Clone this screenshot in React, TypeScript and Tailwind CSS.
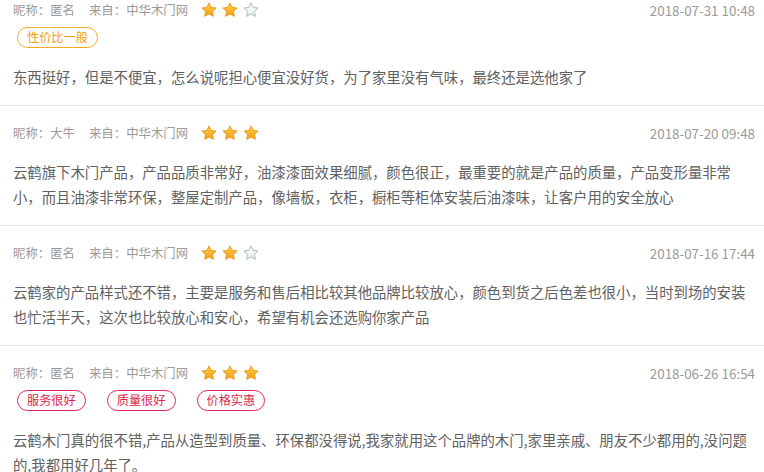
import React from "react";

// --- Types ---
interface Tag {
    text: string;
    tone: "orange" | "red";
}

interface Review {
    id: number;
    name: string;
    source: string;
    stars: number;
    date: string;
    tags: Tag[];
    content: string;
}

const reviews: Review[] = [
    {
        id: 1,
        name: "匿名",
        source: "中华木门网",
        stars: 2,
        date: "2018-07-31 10:48",
        tags: [{ text: "性价比一般", tone: "orange" }],
        content:
            "东西挺好，但是不便宜，怎么说呢担心便宜没好货，为了家里没有气味，最终还是选他家了",
    },
    {
        id: 2,
        name: "大牛",
        source: "中华木门网",
        stars: 3,
        date: "2018-07-20 09:48",
        tags: [],
        content:
            "云鹤旗下木门产品，产品品质非常好，油漆漆面效果细腻，颜色很正，最重要的就是产品的质量，产品变形量非常小，而且油漆非常环保，整屋定制产品，像墙板，衣柜，橱柜等柜体安装后油漆味，让客户用的安全放心",
    },
    {
        id: 3,
        name: "匿名",
        source: "中华木门网",
        stars: 2,
        date: "2018-07-16 17:44",
        tags: [],
        content:
            "云鹤家的产品样式还不错，主要是服务和售后相比较其他品牌比较放心，颜色到货之后色差也很小，当时到场的安装也忙活半天，这次也比较放心和安心，希望有机会还选购你家产品",
    },
    {
        id: 4,
        name: "匿名",
        source: "中华木门网",
        stars: 3,
        date: "2018-06-26 16:54",
        tags: [
            { text: "服务很好", tone: "red" },
            { text: "质量很好", tone: "red" },
            { text: "价格实惠", tone: "red" },
        ],
        content:
            "云鹤木门真的很不错,产品从造型到质量、环保都没得说,我家就用这个品牌的木门,家里亲戚、朋友不少都用的,没问题的,我都用好几年了。",
    },
];

const STAR_PATH =
    "M12 2.6l2.85 5.95 6.55.85-4.8 4.55 1.2 6.5L12 17.3l-5.8 3.15 1.2-6.5-4.8-4.55 6.55-.85z";

const Star: React.FC<{ filled: boolean }> = ({ filled }) => (
    <svg width="18" height="18" viewBox="0 0 24 24">
        <defs>
            <linearGradient id="starFill" x1="0" y1="0" x2="0" y2="1">
                <stop offset="0%" stopColor="#ffcf4d" />
                <stop offset="100%" stopColor="#f79a12" />
            </linearGradient>
            <linearGradient id="starEmpty" x1="0" y1="0" x2="0" y2="1">
                <stop offset="0%" stopColor="#ffffff" />
                <stop offset="100%" stopColor="#e4ecec" />
            </linearGradient>
        </defs>
        <path
            d={STAR_PATH}
            fill={filled ? "url(#starFill)" : "url(#starEmpty)"}
            stroke={filled ? "#eb9a1c" : "#a9b8ba"}
            strokeWidth="1.3"
            strokeLinejoin="round"
        />
    </svg>
);

const ReviewItem: React.FC<{ review: Review }> = ({ review }) => (
    <li className="border-b border-[#e6e6e6] pt-[17px] pb-[16px] pl-[13px] pr-[9px] first:pt-0">
        {/* Header: name, source, stars, date */}
        <div className="flex items-center h-[20px] text-[12.4px] text-[#9a9a9a]">
            <span>昵称：{review.name}</span>
            <span className="ml-[14px]">来自：{review.source}</span>
            <span className="ml-[12px] flex items-center gap-[3px]">
                {[0, 1, 2].map((i) => (
                    <Star key={i} filled={i < review.stars} />
                ))}
            </span>
            <span className="ml-auto text-[13.4px] text-[#9a9a9a]">{review.date}</span>
        </div>

        {/* Tags */}
        {review.tags.length > 0 && (
            <div className="flex items-center gap-[21px] mt-[7px] ml-[4px]">
                {review.tags.map((tag) => (
                    <span
                        key={tag.text}
                        className={
                            tag.tone === "orange"
                                ? "h-[21px] flex items-center px-[9px] rounded-full border border-[#f7a823] text-[#f39c1a] text-[12.2px]"
                                : "h-[21px] flex items-center px-[9px] rounded-full border border-[#e4245a] text-[#dc1f50] text-[12.2px]"
                        }
                    >
                        {tag.text}
                    </span>
                ))}
            </div>
        )}

        {/* Content */}
        <p className="mt-[16px] text-[14.36px] leading-[25px] text-[#616161]">{review.content}</p>
    </li>
);

const App: React.FC = () => {
    return (
        <div
            className="w-[764px] h-[472px] overflow-hidden bg-white"
            style={{ fontFamily: '"Noto Sans CJK SC", "Noto Sans", sans-serif' }}
        >
            <ul>
                {reviews.map((r) => (
                    <ReviewItem key={r.id} review={r} />
                ))}
            </ul>
        </div>
    );
};

export default App;
